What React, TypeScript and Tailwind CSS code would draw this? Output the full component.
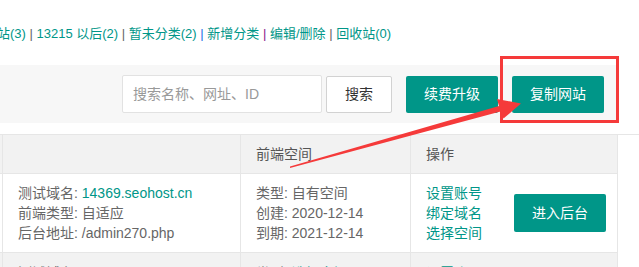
import React from 'react';

const font = { fontFamily: '"Liberation Sans", Arial, "Noto Sans CJK SC", sans-serif' };

const Sep = ({ color = 'text-[#666]' }: { color?: string }) => (
  <span className={`whitespace-pre ${color}`}>{' | '}</span>
);

const Arrow = () => (
  <svg className="absolute left-0 top-0 pointer-events-none" width="639" height="267" viewBox="0 0 639 267">
    <polygon
      points="290,168 500.5,111.5 503.5,118.5 521,103.5 497,99 499,106 290,166.6"
      fill="#f53a3a"
    />
  </svg>
);

export default function App() {
  const navLinks: [string, string?][] = [
    ['网站(3)'],
    ['13215 以后(2)'],
    ['暂未分类(2)'],
    ['新增分类', 'text-[#1a73e8]'],
    ['编辑/删除', 'text-[#8b1a8b]'],
    ['回收站(0)'],
  ];

  return (
    <div className="relative w-[639px] h-[267px] overflow-hidden bg-white text-[#666]" style={font}>
      {/* top nav */}
      <div className="h-[65px] pt-[3px] flex items-center text-[13px] whitespace-nowrap">
        <div className="ml-[-16px] flex items-center">
          {navLinks.map(([label], i) => (
            <React.Fragment key={label}>
              <span className="text-[#009688]">{label}</span>
              {i < navLinks.length - 1 && <Sep color={navLinks[i + 1][1] ?? 'text-[#666]'} />}
            </React.Fragment>
          ))}
        </div>
      </div>

      {/* toolbar */}
      <div className="w-[618px] h-[58px] bg-[#f7f7f7] flex items-center pl-[122px]">
        <div className="w-[200px] h-[38px] bg-white border border-[#e2e2e2] rounded-[2px] flex items-center px-[10px] text-[14px] text-[#999]">
          搜索名称、网址、ID
        </div>
        <button className="ml-[4px] w-[66px] h-[37px] bg-white border border-[#d2d2d2] rounded-[2px] text-[14px] text-[#333]">
          搜索
        </button>
        <button className="ml-[14px] w-[92px] h-[37px] bg-[#009688] rounded-[2px] text-[14px] text-white">
          续费升级
        </button>
        <button className="ml-[14px] w-[92px] h-[37px] bg-[#009688] rounded-[2px] text-[14px] text-white">
          复制网站
        </button>
      </div>

      {/* table */}
      <div className="mt-[11px] ml-[-37px] grid grid-cols-[40px_238px_170px_207px] text-[14px] leading-[20px] border-t border-[#e6e6e6]">
        {/* header */}
        <div className="h-[39px] bg-[#f2f2f2] border-r border-b border-[#e6e6e6]" />
        <div className="h-[39px] bg-[#f2f2f2] border-r border-b border-[#e6e6e6]" />
        <div className="h-[39px] bg-[#f2f2f2] border-r border-b border-[#e6e6e6] flex items-center px-[15px] text-[#555]">前端空间</div>
        <div className="h-[39px] bg-[#f2f2f2] border-r border-b border-[#e6e6e6] flex items-center px-[15px] text-[#555]">操作</div>

        {/* row 1 */}
        <div className="h-[79px] border-r border-b border-[#e6e6e6]" />
        <div className="h-[79px] border-r border-b border-[#e6e6e6] flex flex-col justify-center px-[15px] whitespace-nowrap">
          <div>测试域名: <span className="text-[#009688]">14369.seohost.cn</span></div>
          <div>前端类型: 自适应</div>
          <div>后台地址: /admin270.php</div>
        </div>
        <div className="h-[79px] border-r border-b border-[#e6e6e6] flex flex-col justify-center px-[15px] whitespace-nowrap">
          <div>类型: 自有空间</div>
          <div>创建: 2020-12-14</div>
          <div>到期: 2021-12-14</div>
        </div>
        <div className="h-[79px] border-r border-b border-[#e6e6e6] flex items-center justify-between pl-[15px] pr-[11px]">
          <div className="flex flex-col text-[#009688]">
            <span>设置账号</span>
            <span>绑定域名</span>
            <span>选择空间</span>
          </div>
          <button className="w-[92px] h-[38px] bg-[#009688] rounded-[2px] text-white text-[14px]">进入后台</button>
        </div>

        {/* row 2 (cut off by the window) */}
        <div className="h-[79px] bg-[#f2f2f2] border-r border-[#e6e6e6]" />
        <div className="h-[79px] bg-[#f2f2f2] border-r border-[#e6e6e6] pt-[10px] px-[15px] whitespace-nowrap">
          <div>测试域名: <span className="text-[#009688]">14368.seohost.cn</span></div>
        </div>
        <div className="h-[79px] bg-[#f2f2f2] border-r border-[#e6e6e6] pt-[10px] px-[15px] whitespace-nowrap">
          <div>类型: <span className="text-[#009688]">选择空间</span></div>
        </div>
        <div className="h-[79px] bg-[#f2f2f2] border-r border-[#e6e6e6] pt-[10px] px-[15px] text-[#009688]">
          <div>设置账号</div>
        </div>
      </div>

      {/* highlight box */}
      <div className="absolute left-[500px] top-[56px] w-[119px] h-[67px] border-[3px] border-[#f53a3a]" />
      <Arrow />
    </div>
  );
}
